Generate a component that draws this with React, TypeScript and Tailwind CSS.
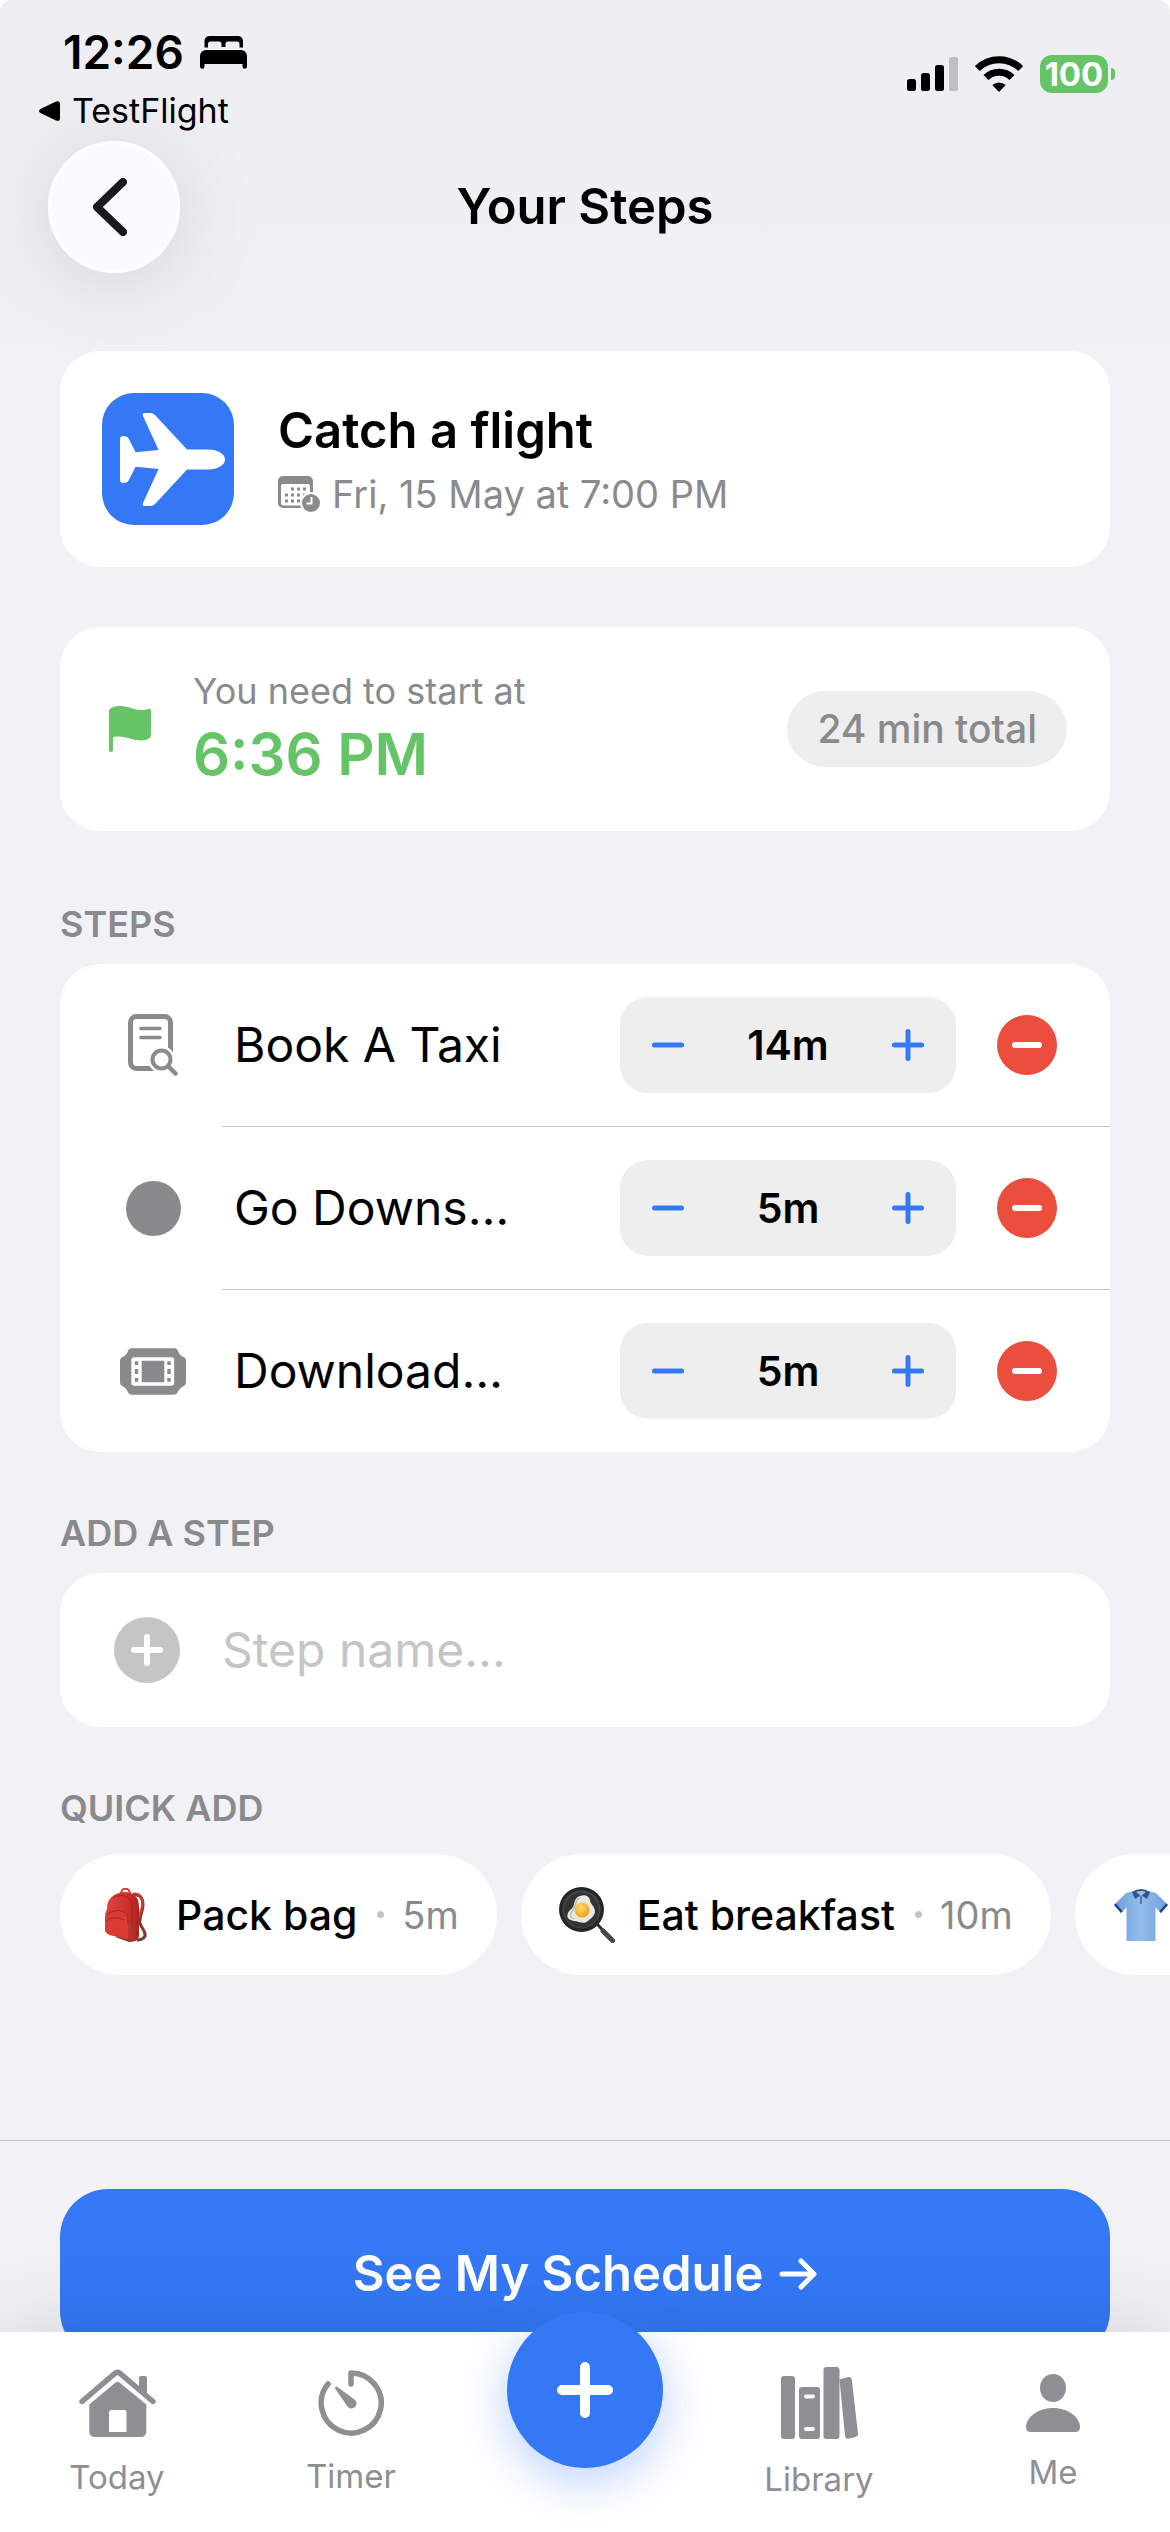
import { useState } from 'react';
import type { ReactNode } from 'react';

const BedIcon = () => (
  <svg width="47" height="33" viewBox="0 0 47 33" aria-hidden="true">
    <path d="M4.5 11.500V5a5 5 0 0 1 5-5h28.500a5 5 0 0 1 5 5v6.500h-3.500V8q0-2.500-2.500-2.500h-9q-2.500 0-2.500 2.500v3h-4V8q0-2.500-2.500-2.500h-8.500q-2.500 0-2.500 2.500v3.500z" />
    <path d="M0 20a6 6 0 0 1 6-6h35a6 6 0 0 1 6 6v10.500a2 2 0 0 1-4.500 0V28H4.500v2.500a2 2 0 0 1-4.500 0z" />
  </svg>
);

const SignalIcon = () => (
  <svg width="51" height="34" viewBox="0 0 51 34" aria-hidden="true">
    <rect y="22" width="9" height="12" rx="2.500" />
    <rect x="14" y="16" width="9" height="18" rx="2.500" />
    <rect x="28" y="8" width="9" height="26" rx="2.500" />
    <rect x="42" width="9" height="34" rx="2.500" fill="#bfbec4" />
  </svg>
);

const WifiIcon = () => (
  <svg width="48" height="36" viewBox="0 0 48 36" aria-hidden="true">
    <path d="M2.300 12.600a31 31 0 0 1 43.400 0" fill="none" stroke="#000" strokeWidth="7" />
    <path d="M11 21.500a18.500 18.500 0 0 1 26 0" fill="none" stroke="#000" strokeWidth="7" />
    <path d="M17.300 29a10 10 0 0 1 13.400 0L24 36z" />
  </svg>
);

const PlaneIcon = () => (
  <svg width="105" height="93" viewBox="0 0 105 93" fill="#fff" aria-hidden="true">
    <path d="M67 36.500 35 2Q33 0 30 0h-5.500Q22 0 23 3l15.600 34-23 2.300-7-13.800Q7.500 23.300 5 23.300H2Q0 23.300 0 26v41q0 2.700 2 2.700h3q2.500 0 3.600-2.200l7-13.800 23 2.300L23 90q-1 3 1.500 3H30q3 0 5-2l32-34.500h21c10 0 17-4.500 17-10s-7-10-17-10z" />
  </svg>
);

const CalendarClockIcon = () => (
  <svg width="42" height="36" viewBox="0 0 42 36" aria-hidden="true">
    <path fill="#8a8a8c" fillRule="evenodd" d="M5 0h25a5 5 0 0 1 5 5v27H5a5 5 0 0 1-5-5V5a5 5 0 0 1 5-5zM5 8q-2 0-2 2v17q0 2.500 2.500 2.500H32V10q0-2-2-2z" />
    <g fill="#8a8a8c">
      <path d="M13 11.500h3v3h-3zM19 11.500h3v3h-3zM25 11.500h3v3h-3zM7 17.500h3v3H7zM13 17.500h3v3h-3zM19 17.500h3v3h-3zM25 17.500h3v3h-3zM7 23.500h3v3H7zM13 23.500h3v3h-3zM19 23.500h3v3h-3z" />
    </g>
    <circle cx="33" cy="27" r="11" fill="#fff" />
    <circle cx="33" cy="27" r="9" fill="#8a8a8c" />
    <path d="M33.500 21v6.500h-5" fill="none" stroke="#fff" strokeWidth="2" />
  </svg>
);

const FlagIcon = () => (
  <svg width="42" height="46" viewBox="0 0 42 46" fill="#65c466" aria-hidden="true">
    <path d="M0 4Q3 0 11 0c9 0 13 4 22 4 3 0 5-.5 6.500-1Q42 2 42 4.500V29q0 2.500-2 3.500-3 2-7 2c-10 0-15-4-23-4-3 0-5 .500-6 .800V44a2 2 0 0 1-4 0z" />
  </svg>
);

const DocSearchIcon = () => (
  <svg width="50" height="62" viewBox="0 0 50 62" fill="none" stroke="#8a8a8c" strokeLinecap="round" aria-hidden="true">
    <rect x="2.500" y="2.500" width="40" height="52" rx="6" strokeWidth="5" />
    <path d="M13 14.500h19M13 23.500h19" strokeWidth="3.500" />
    <circle cx="33.500" cy="45.500" r="11" fill="#fff" stroke="#fff" strokeWidth="5" />
    <path d="m41 53 7 6" stroke="#fff" strokeWidth="8" />
    <circle cx="33.500" cy="45.500" r="9" strokeWidth="4" />
    <path d="m40.500 52.500 7 7" strokeWidth="4.500" />
  </svg>
);

const DotIcon = () => <span className="size-[55px] rounded-full bg-[#8a8a8c]" />;

const TicketIcon = () => (
  <svg width="67" height="47" viewBox="0 0 67 47" fill="#8a8a8c" aria-hidden="true">
    <path d="M8 3q1-3 4-3h43q3 0 4 3c1 3 3 5 6 6q2 1 2 3v23q0 2-2 3c-3 1.500-5 3.500-6.500 6.500Q57.500 47 55 47H12q-3 0-4-2.500C7 41.500 5 39.500 2 38q-2-1-2-3V12q0-2 2-3c3-1 5-3 6-6z" />
    <rect x="11.500" y="9" width="43.500" height="29" rx="3" fill="#fff" />
    <path d="M22 12.500h23v22H22zM15 13h3.500v4H15zM15 21h3.500v5H15zM15 30h3.500v4H15zM48 13h3.500v4H48zM48 21h3.500v5H48zM48 30h3.500v4H48z" />
  </svg>
);

const BackpackEmoji = () => (
  <svg width="42" height="54" viewBox="0 0 42 54" aria-hidden="true">
    <defs>
      <linearGradient id="bag" x1="0" x2="1" y1="0" y2="0">
        <stop offset="0" stopColor="#e2443c" />
        <stop offset=".65" stopColor="#cf302c" />
        <stop offset="1" stopColor="#a8241f" />
      </linearGradient>
    </defs>
    <path d="M28 7c7-1 10 3 10 10 0 6-4 12-3 18 1 5 6 8 5 13-1 2-4 4-8 4" fill="none" stroke="#7c3a2b" strokeWidth="3" />
    <path d="M28 6c7-1 9.500 3 9.500 10 0 5-3 9-3.500 14" fill="none" stroke="#c93a34" strokeWidth="2.500" />
    <path d="M16 6c0-7 9-7 9 0" fill="none" stroke="#c93a34" strokeWidth="2" />
    <path d="M10 49l14 5c4 0 8-1 9-3V44z" fill="#7b4330" />
    <path d="M2 21C2 11 8 5 19 4c11 0 15 6 15 15v30q-3 3-9 3L5 47Q0 45 0 41V28q0-3 2-7z" fill="url(#bag)" />
    <path d="M1 28c3-5 9-6 15-5 5 1 7 5 7 10v18L5 47Q0 45 0 41z" fill="#da3b35" />
    <path d="M2 27c4-4 9-5 14-4 5 1 7 5 7 10v3M1 33c4-4 12-4 18-1M8 10c6-4 17-4 19 7v30" fill="none" stroke="#a32520" strokeWidth="1" />
    <path d="M27 38v7" stroke="#5a5a62" strokeWidth="1.500" />
  </svg>
);

const FryingPanEmoji = () => (
  <svg width="56" height="56" viewBox="0 0 56 56" aria-hidden="true">
    <defs>
      <radialGradient id="yolk" cx=".4" cy=".35" r=".7">
        <stop offset="0" stopColor="#ffdf6b" />
        <stop offset="1" stopColor="#f2971c" />
      </radialGradient>
    </defs>
    <path d="m39 38 14 15" stroke="#2c2c2e" strokeWidth="3" strokeLinecap="round" />
    <path d="m44 44 9.500 9.500" stroke="#48484b" strokeWidth="5" strokeLinecap="round" />
    <circle cx="22.500" cy="22.500" r="22.500" fill="#262627" />
    <circle cx="22.500" cy="22.500" r="19" fill="#474748" />
    <circle cx="22.500" cy="23" r="17.500" fill="#333334" />
    <path d="M21 9c5-2 9 0 10 4 0 4 5 6 5 12-1 5-4 6-7 9-5 4-9 0-14 0-5-1-8-3-6-8 2-4 5-4 6-9 1-4 2-7 6-8z" fill="#e9e9df" />
    <path d="M20 11c-4 3-4 11-8 15-1 3 0 5 3 6" fill="none" stroke="#bcbcb2" strokeWidth="1.500" />
    <circle cx="23" cy="23" r="7.500" fill="url(#yolk)" />
  </svg>
);

const ShirtEmoji = () => (
  <svg width="54" height="54" viewBox="0 0 54 54" aria-hidden="true">
    <defs>
      <linearGradient id="shirt" x1="0" x2="1" y1="0" y2="0">
        <stop offset="0" stopColor="#6c9fda" />
        <stop offset=".5" stopColor="#93bdec" />
        <stop offset="1" stopColor="#6c9fda" />
      </linearGradient>
    </defs>
    <path d="M12 5 0 17l7 8 5.500-5.500V53h29V19.500L47 25l7-8L42 5l-8-2H20z" fill="url(#shirt)" />
    <path d="m0 17 7 8 1.800-1.800-7-8zM54 17l-7 8-1.800-1.800 7-8z" fill="#264a86" />
    <path d="M18 4q9-6 18 0l-3 7-6-4-6 4z" fill="#2e5798" />
    <path d="m22 4 5 4 5-4q-5-2-10 0z" fill="#a9c3c8" />
    <path d="M27 8v8" stroke="#3a659f" strokeWidth="1.500" />
  </svg>
);

const HomeIcon = () => (
  <svg width="77" height="68" viewBox="0 0 77 68" fill="#8e8e93" aria-hidden="true">
    <path d="M60 20V9q0-2 2-2h4q2 0 2 2v16z" />
    <path d="M3 32.500 36.500 4q2-1.500 4 0L74 32.500" fill="none" stroke="#8e8e93" strokeWidth="5.500" strokeLinecap="round" />
    <path fillRule="evenodd" d="m36.500 13.500-26.200 22V62q0 6 6 6h45q6 0 6-6V35.500l-26.800-22q-2-1.500-4 0zM32.500 41h12.500q2.500 0 2.500 2.500V63H30V43.500q0-2.500 2.500-2.500z" />
  </svg>
);

const TimerIcon = () => (
  <svg width="66" height="66" viewBox="0 0 66 66" fill="none" stroke="#8e8e93" aria-hidden="true">
    <path d="M33 14V3a30 30 0 1 1-23 11" strokeWidth="5.500" strokeLinecap="round" strokeLinejoin="round" />
    <path d="m17 18.500 12.500 18a5 5 0 1 0 7-7L19.500 17a1.800 1.800 0 0 0-2.500 1.500z" fill="#8e8e93" stroke="none" />
  </svg>
);

const LibraryIcon = () => (
  <svg width="77" height="72" viewBox="0 0 77 72" fill="#8e8e93" aria-hidden="true">
    <rect y="9" width="14" height="63" rx="3" />
    <path fillRule="evenodd" d="M21 20h15q3 0 3 3v46q0 3-3 3H21q-3 0-3-3V23q0-3 3-3zm4 7.500a2 2 0 0 0 0 4h7a2 2 0 0 0 0-4zm0 32.500a2 2 0 0 0 0 4h7a2 2 0 0 0 0-4z" />
    <rect x="42.500" width="16" height="72" rx="3" />
    <path d="M58.500 12.500 67.500 10q3-.5 3.300 2.500L77 66.500q.300 3-2.500 3.500l-7 1.700q-3 .300-3.500-3z" />
  </svg>
);

const PersonIcon = () => (
  <svg width="54" height="58" viewBox="0 0 54 58" fill="#8e8e93" aria-hidden="true">
    <ellipse cx="27" cy="14" rx="13" ry="14" />
    <path d="M0 53c0-9 11-19 27-19s27 10 27 19q0 5-5 5H5q-5 0-5-5z" />
  </svg>
);

const initialSteps = [
  { id: 'taxi', name: 'Book A Taxi', minutes: 14, icon: DocSearchIcon },
  { id: 'down', name: 'Go Downs…', minutes: 5, icon: DotIcon },
  { id: 'download', name: 'Download…', minutes: 5, icon: TicketIcon },
];

const quickAdds = [
  { id: 'bag', name: 'Pack bag', minutes: 5, icon: BackpackEmoji },
  { id: 'breakfast', name: 'Eat breakfast', minutes: 10, icon: FryingPanEmoji },
  { id: 'clothes', icon: ShirtEmoji },
];

function SectionTitle({ children }: { children: ReactNode }) {
  return <h2 className="text-[36px] leading-9 font-semibold text-[#8a8a8e]">{children}</h2>;
}

function TabItem({ label, children }: { label: string; children: ReactNode }) {
  return (
    <button type="button" className="flex flex-1 flex-col items-center justify-center gap-5">
      {children}
      <span className="text-[33px] leading-10 text-[#8e8e93]">{label}</span>
    </button>
  );
}

export default function App() {
  const [steps, setSteps] = useState(initialSteps);
  const [stepName, setStepName] = useState('');

  const changeMinutes = (id: string, delta: number) =>
    setSteps((prev) => prev.map((s) => (s.id === id ? { ...s, minutes: Math.max(1, s.minutes + delta) } : s)));

  return (
    <div className="flex h-screen flex-col overflow-hidden rounded-t-xl bg-gradient-to-b from-[#efeef3] from-5% to-[#f2f1f6] to-15% font-[Inter,sans-serif] text-black">
      {/* Status bar */}
      <div className="flex justify-between pt-7 pr-[55px] pl-[39px]">
        <div className="flex flex-col gap-[15px]">
          <div className="flex items-center gap-4 pl-6">
            <span className="text-[46px] leading-[48px] font-semibold">12:26</span>
            <BedIcon />
          </div>
          <button type="button" className="flex items-center gap-3">
            <svg width="21" height="20" viewBox="0 0 21 20" aria-hidden="true">
              <path d="M1.500 8 17 .6q4-1.500 4 2.400v14q0 4-4 2.400L1.500 12q-3-2 0-4z" />
            </svg>
            <span className="text-[34px] leading-10">TestFlight</span>
          </button>
        </div>
        <div className="flex h-[92px] items-center gap-[17px]">
          <SignalIcon />
          <WifiIcon />
          <div className="flex items-center gap-[3px]">
            <span className="flex h-[38px] w-[68px] items-center justify-center rounded-xl bg-[#65c466] text-[33px] leading-none font-bold text-white">
              100
            </span>
            <span className="h-3 w-1 rounded-r-full bg-[#65c466]" />
          </div>
        </div>
      </div>

      {/* Navigation header */}
      <header className="grid grid-cols-[132px_1fr_132px] items-center px-12 pt-[10px]">
        <button
          type="button"
          aria-label="Back"
          className="flex size-[132px] items-center justify-center rounded-full border-[3px] border-white bg-[#fafaff] pr-2 shadow-[0_12px_90px_rgba(0,0,0,0.12)]"
        >
          <svg width="34" height="58" viewBox="0 0 34 58" fill="none" stroke="#1a1a1e" strokeWidth="8" strokeLinecap="round" strokeLinejoin="round" aria-hidden="true">
            <path d="M30 4 4 29l26 25" />
          </svg>
        </button>
        <h1 className="text-center text-[49px] leading-[60px] font-semibold">Your Steps</h1>
      </header>

      <main className="flex-1 px-[60px] pt-[78px]">
        <section className="flex items-center gap-11 rounded-[40px] bg-white p-[42px]">
          <div className="flex size-[132px] shrink-0 items-center justify-center rounded-[32px] bg-[#3478f6] pl-2">
            <PlaneIcon />
          </div>
          <div className="flex flex-col gap-2">
            <h2 className="text-[49px] leading-[62px] font-semibold">Catch a flight</h2>
            <p className="flex items-center gap-3 text-[38px] leading-[48px] text-[#8a8a8c]">
              <CalendarClockIcon />
              Fri, 15 May at 7:00 PM
            </p>
          </div>
        </section>

        <section className="mt-[60px] flex items-center rounded-[40px] bg-white py-[42px] pr-[43px] pl-[49px]">
          <FlagIcon />
          <div className="ml-[42px] flex flex-1 flex-col gap-[6px]">
            <p className="text-[36px] leading-[44px] text-[#8a8a8c]">You need to start at</p>
            <p className="text-[58px] leading-[70px] font-semibold text-[#65c466]">6:36 PM</p>
          </div>
          <span className="rounded-full bg-[#eee] px-[30px] py-[14px] text-[39px] leading-[48px] font-medium text-[#8a8a8c]">
            24 min total
          </span>
        </section>

        <div className="mt-[75px]">
          <SectionTitle>STEPS</SectionTitle>
          <ul className="mt-[22px] rounded-[40px] bg-white">
            {steps.map((step, index) => {
              const Icon = step.icon;

              return (
                <li key={step.id}>
                  {index > 0 && <div className="ml-[162px] h-px bg-[#c6c6c8]" />}
                  <div className="flex h-[162px] items-center pr-[53px] pl-[60px]">
                    <span className="flex w-[66px] shrink-0 items-center justify-center">
                      <Icon />
                    </span>
                    <span className="ml-12 flex-1 truncate text-[48px] leading-[60px]">{step.name}</span>
                    <div className="flex h-24 w-[336px] items-center justify-between rounded-[28px] bg-[#eee] px-8">
                      <button type="button" aria-label={`Less time for ${step.name}`} onClick={() => changeMinutes(step.id, -1)}>
                        <svg width="32" height="32" viewBox="0 0 32 32" stroke="#3478f6" strokeWidth="5" strokeLinecap="round" aria-hidden="true">
                          <path d="M2.500 16h27" />
                        </svg>
                      </button>
                      <span className="text-[41px] leading-[48px] font-semibold">{step.minutes}m</span>
                      <button type="button" aria-label={`More time for ${step.name}`} onClick={() => changeMinutes(step.id, 1)}>
                        <svg width="32" height="32" viewBox="0 0 32 32" stroke="#3478f6" strokeWidth="5" strokeLinecap="round" aria-hidden="true">
                          <path d="M2.500 16h27M16 2.500v27" />
                        </svg>
                      </button>
                    </div>
                    <button
                      type="button"
                      aria-label={`Remove ${step.name}`}
                      onClick={() => setSteps((prev) => prev.filter((s) => s.id !== step.id))}
                      className="ml-[41px] flex size-[60px] items-center justify-center rounded-full bg-[#eb4e3d]"
                    >
                      <span className="h-[6px] w-[30px] rounded-full bg-white" />
                    </button>
                  </div>
                </li>
              );
            })}
          </ul>
        </div>

        <div className="mt-[63px]">
          <SectionTitle>
            <label htmlFor="step-name">ADD A STEP</label>
          </SectionTitle>
          <div className="mt-[22px] flex h-[154px] items-center gap-[42px] rounded-[40px] bg-white px-[54px]">
            <button type="button" aria-label="Add step" className="flex size-[66px] shrink-0 items-center justify-center rounded-full bg-[#c5c5c5]">
              <svg width="32" height="32" viewBox="0 0 32 32" stroke="#fff" strokeWidth="6" strokeLinecap="round" aria-hidden="true">
                <path d="M3 16h26M16 3v26" />
              </svg>
            </button>
            <input
              id="step-name"
              type="text"
              value={stepName}
              onChange={(e) => setStepName(e.target.value)}
              placeholder="Step name…"
              className="min-w-0 flex-1 bg-transparent text-[48px] leading-[60px] outline-none placeholder:text-[#c5c5c5]"
            />
          </div>
        </div>

        <div className="mt-[63px]">
          <SectionTitle>QUICK ADD</SectionTitle>
          <div className="-mx-[60px] mt-7 flex gap-6 overflow-x-auto px-[60px] [scrollbar-width:none]">
            {quickAdds.map((item) => {
              const Emoji = item.icon;

              return (
                <button
                  key={item.id}
                  type="button"
                  aria-label={item.name ?? item.id}
                  className="flex h-[121px] min-w-60 shrink-0 items-center rounded-full bg-white px-[38px] text-[41px] leading-[48px] whitespace-nowrap"
                >
                  <span className="flex w-14 justify-center">
                    <Emoji />
                  </span>
                  {item.name && (
                    <>
                      <span className="ml-[22px] font-medium">{item.name}</span>
                      <span className="mr-[18px] ml-5 size-[7px] rounded-full bg-[#c5c5c5]" />
                      <span className="text-[38px] text-[#8a8a8c]">{item.minutes}m</span>
                    </>
                  )}
                </button>
              );
            })}
          </div>
        </div>
      </main>

      {/* The lower edge of this button slides under the tab bar */}
      <div className="border-t border-[#bdbcc1] px-[60px] pt-12">
        <button type="button" className="flex h-[170px] w-full items-center justify-center gap-4 rounded-[48px] bg-[#3478f6] text-[49px] leading-[60px] font-semibold text-white">
          See My Schedule
          <svg width="38" height="32" viewBox="0 0 38 32" fill="none" stroke="#fff" strokeWidth="5" strokeLinecap="round" strokeLinejoin="round" aria-hidden="true">
            <path d="M3 16h31M22 3l13 13-13 13" />
          </svg>
        </button>
      </div>

      <nav className="relative -mt-[27px] flex h-[200px] shrink-0 bg-white pt-[2px] shadow-[0_-6px_80px_rgba(0,0,0,0.12)]">
        <TabItem label="Today">
          <HomeIcon />
        </TabItem>
        <TabItem label="Timer">
          <TimerIcon />
        </TabItem>
        <div className="flex flex-1 justify-center">
          <button
            type="button"
            aria-label="Add"
            className="-mt-[22px] flex size-[156px] items-center justify-center rounded-full bg-[#3478f6] shadow-[0_12px_48px_rgba(52,120,246,0.35)]"
          >
            <svg width="56" height="56" viewBox="0 0 56 56" stroke="#fff" strokeWidth="10" strokeLinecap="round" aria-hidden="true">
              <path d="M5 28h46M28 5v46" />
            </svg>
          </button>
        </div>
        <TabItem label="Library">
          <LibraryIcon />
        </TabItem>
        <TabItem label="Me">
          <PersonIcon />
        </TabItem>
      </nav>
    </div>
  );
}
